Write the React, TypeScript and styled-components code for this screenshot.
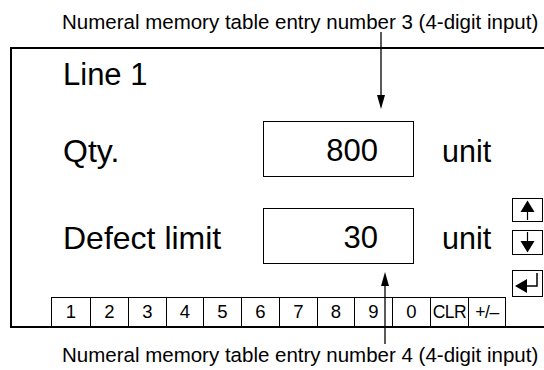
import styled, { createGlobalStyle } from "styled-components";

const GlobalStyle = createGlobalStyle`
  html, body {
    margin: 0;
    padding: 0;
    background: #ffffff;
  }
  body {
    font-family: "Liberation Sans", Arial, sans-serif;
    color: #000000;
  }
`;

const StyledPage = styled.div`
  position: relative;
  width: 544px;
  height: 370px;
  overflow: hidden;
  background: #ffffff;
`;

const StyledCaption = styled.div<{ $top: number }>`
  padding-left: 62px;
  margin-top: ${(p) => p.$top}px;
  font-size: 20.5px;
  line-height: 24px;
  white-space: nowrap;
`;

const StyledPanel = styled.div`
  display: flex;
  margin: 13px 0 0 10px;
  width: 560px;
  height: 277px;
  border: 2px solid #000;
`;

const StyledMain = styled.div`
  display: flex;
  flex-direction: column;
  width: 500px;
  flex: none;
`;

const StyledTitle = styled.div`
  margin-top: 10px;
  padding-left: 51px;
  font-size: 31px;
  line-height: 32px;
`;

const StyledRow = styled.div<{ $gap: number }>`
  display: grid;
  grid-template-columns: 200px 151px auto;
  align-items: center;
  margin-top: ${(p) => p.$gap}px;
  padding-left: 51px;
  font-size: 31px;
  line-height: 32px;
`;

const StyledLabel = styled.div<{ $wide?: boolean }>`
  padding-top: 3px;
  white-space: nowrap;
  font-size: ${(p) => (p.$wide ? "32px" : "31px")};
`;

const StyledUnit = styled(StyledLabel)`
  padding-left: 28px;
  font-size: 30.5px;
`;

const StyledValueBox = styled.div`
  box-sizing: border-box;
  height: 56px;
  border: 1px solid #000;
  display: flex;
  align-items: center;
  justify-content: flex-end;
  padding: 3px 35px 0 0;
`;

const StyledKeypad = styled.div`
  display: grid;
  grid-template-columns: 39px 38px 38px 37px 38px 38px 38px 37px 38px 38px 38px 37px;
  margin: auto 0 0 39px;
  height: 29px;
`;

const StyledKey = styled.div<{ $small?: boolean }>`
  box-sizing: border-box;
  border: 1px solid #000;
  border-bottom: none;
  margin-right: -1px;
  display: flex;
  align-items: center;
  justify-content: center;
  font-size: ${(p) => (p.$small ? "17.5px" : "18.5px")};
  letter-spacing: ${(p) => (p.$small ? "-0.5px" : "0")};
  white-space: nowrap;
  overflow: hidden;
`;

const StyledSide = styled.div`
  display: flex;
  flex-direction: column;
  padding-top: 149px;
`;

const StyledSideBtn = styled.div<{ $h: number; $gap: number }>`
  box-sizing: border-box;
  width: 31px;
  height: ${(p) => p.$h}px;
  margin-top: ${(p) => p.$gap}px;
  border: 1px solid #000;
  display: flex;
  align-items: center;
  justify-content: center;
`;

const StyledOverlay = styled.svg`
  position: absolute;
  left: 0;
  top: 0;
  pointer-events: none;
`;

const keys = ["1", "2", "3", "4", "5", "6", "7", "8", "9", "0", "CLR", "+/\u2013"];

const UpIcon = () => (
  <svg width="29" height="22" viewBox="0 0 29 22">
    <polygon points="14.5,1.5 7.5,13 21.5,13" fill="#000" />
    <line x1="14.5" y1="12" x2="14.5" y2="21" stroke="#000" strokeWidth="1.2" />
  </svg>
);

const DownIcon = () => (
  <svg width="29" height="23" viewBox="0 0 29 23">
    <line x1="14.5" y1="1" x2="14.5" y2="10" stroke="#000" strokeWidth="1.2" />
    <polygon points="14.5,21.5 7.5,10 21.5,10" fill="#000" />
  </svg>
);

const EnterIcon = () => (
  <svg width="29" height="25" viewBox="0 0 29 25">
    <polyline points="24,2 24,15 12,15" fill="none" stroke="#000" strokeWidth="1.5" />
    <polygon points="2,15 14,8 14,22" fill="#000" />
  </svg>
);

const App = () => {
  return (
    <StyledPage>
      <GlobalStyle />
      <StyledCaption $top={10}>Numeral memory table entry number 3 (4-digit input)</StyledCaption>

      <StyledPanel>
        <StyledMain>
          <StyledTitle>Line 1</StyledTitle>

          <StyledRow $gap={30}>
            <StyledLabel $wide>Qty.</StyledLabel>
            <StyledValueBox>800</StyledValueBox>
            <StyledUnit>unit</StyledUnit>
          </StyledRow>

          <StyledRow $gap={31}>
            <StyledLabel $wide>Defect limit</StyledLabel>
            <StyledValueBox>30</StyledValueBox>
            <StyledUnit>unit</StyledUnit>
          </StyledRow>

          <StyledKeypad>
            {keys.map((k) => (
              <StyledKey key={k} $small={k.length > 1}>{k}</StyledKey>
            ))}
          </StyledKeypad>
        </StyledMain>

        <StyledSide>
          <StyledSideBtn $h={24} $gap={0}><UpIcon /></StyledSideBtn>
          <StyledSideBtn $h={25} $gap={8}><DownIcon /></StyledSideBtn>
          <StyledSideBtn $h={27} $gap={15}><EnterIcon /></StyledSideBtn>
        </StyledSide>
      </StyledPanel>

      <StyledCaption $top={15}>Numeral memory table entry number 4 (4-digit input)</StyledCaption>

      <StyledOverlay width="544" height="370" viewBox="0 0 544 370">
        <line x1="381" y1="32" x2="381" y2="98" stroke="#000" strokeWidth="1.3" />
        <polygon points="381,109 377,95 385,95" fill="#000" />
        <line x1="385" y1="284" x2="385" y2="344" stroke="#000" strokeWidth="1.3" />
        <polygon points="385,272 381,286 389,286" fill="#000" />
      </StyledOverlay>
    </StyledPage>
  );
};

export default App;
